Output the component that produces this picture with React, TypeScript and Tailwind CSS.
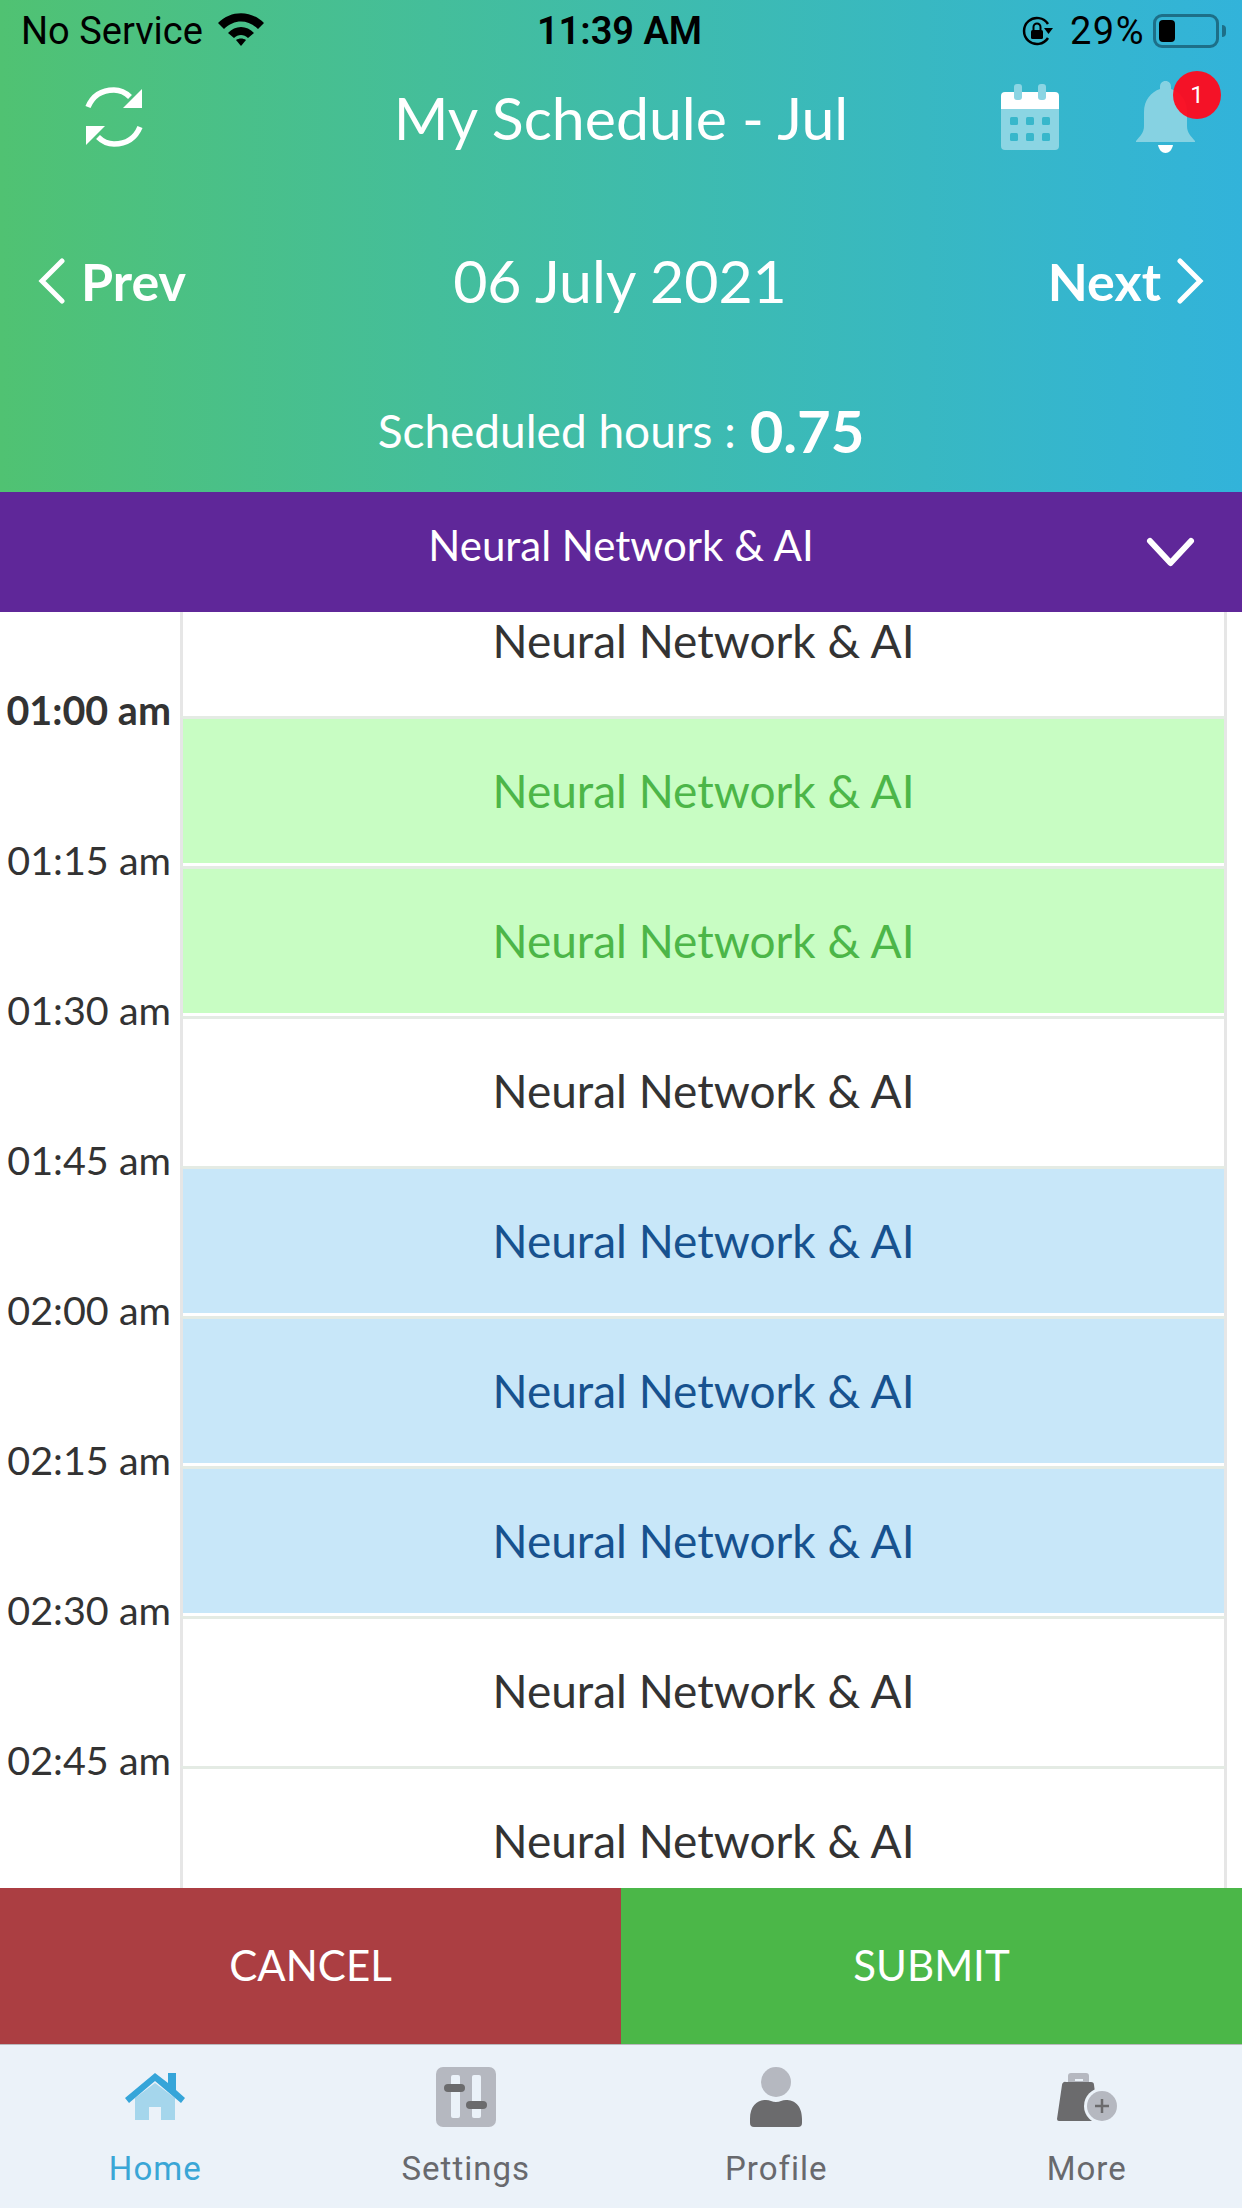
const rows = [
  { time: "01:00 am", kind: "white", bold: true },
  { time: "01:15 am", kind: "green" },
  { time: "01:30 am", kind: "green" },
  { time: "01:45 am", kind: "white" },
  { time: "02:00 am", kind: "blue" },
  { time: "02:15 am", kind: "blue" },
  { time: "02:30 am", kind: "blue" },
  { time: "02:45 am", kind: "white" },
  { time: "", kind: "white" },
];

const cellStyles: Record<string, string> = {
  white: "bg-white text-[#333333]",
  green: "bg-[#c8fdc3] text-[#4cb648]",
  blue: "bg-[#c8e7f9] text-[#17528f]",
};

function StatusBar() {
  return (
    <div className="flex h-[62px] items-center justify-between pl-[21px] pr-[16px] font-['Roboto',sans-serif] text-[38px] text-black">
      <div className="flex w-[400px] items-center gap-[15px]">
        <span>No Service</span>
        <svg width="46" height="33" viewBox="0 0 46 33" className="-mt-[3px]">
          <path d="M0 10C13 -3 33 -3 46 10L40 16C30 6 16 6 6 16Z" fill="black" />
          <path d="M10 20C17 12 29 12 36 20L30 25C26 21 20 21 16 25Z" fill="black" />
          <path d="M18 27C21 25 25 25 28 27L23 33Z" fill="black" />
        </svg>
      </div>
      <span className="pr-[8px] font-semibold">11:39 AM</span>
      <div className="flex w-[400px] items-center justify-end">
        <svg width="31" height="30" viewBox="0 0 31 30" className="mr-[17px]">
          <path d="M26 22A13 13 0 1 1 26 8" fill="none" stroke="black" strokeWidth="2.500" />
          <path d="M22 12H31L26.500 18Z" fill="black" />
          <rect x="9" y="14" width="12" height="9" rx="1.500" fill="black" />
          <path d="M11.500 14V11A3.500 3.500 0 0 1 18.500 11V14" fill="none" stroke="black" strokeWidth="2" />
        </svg>
        <span className="mr-[8px] tracking-[1.500px]">29%</span>
        <div className="-mt-[1px] flex h-[34px] w-[66px] items-center rounded-[9px] border-[3px] border-[#1d6f88] p-[3px]">
          <div className="h-full w-[16px] rounded-[4px] bg-black" />
        </div>
        <div className="ml-[3px] h-[12px] w-[4px] rounded-r-full bg-[#1d6f88]" />
      </div>
    </div>
  );
}

function SyncIcon() {
  return (
    <svg width="58" height="62" viewBox="0 0 58 62" fill="none">
      <path d="M3 21C8 9 18 4 29 4C35 4 40 6 45 11" stroke="white" strokeWidth="5.500" />
      <path d="M57 3V22H38Z" fill="white" />
      <path d="M55 41C50 53 40 58 29 58C23 58 18 56 13 51" stroke="white" strokeWidth="5.500" />
      <path d="M1 59V40H20Z" fill="white" />
    </svg>
  );
}

function CalendarIcon() {
  return (
    <svg width="58" height="66" viewBox="0 0 58 66">
      <path d="M4 8H54A4 4 0 0 1 58 12V25H0V12A4 4 0 0 1 4 8Z" fill="white" />
      <path d="M0 25H58V62A4 4 0 0 1 54 66H4A4 4 0 0 1 0 62Z" fill="#8bd5e3" />
      <rect x="13" y="0" width="8" height="16" rx="3" fill="#8bd5e3" />
      <rect x="37" y="0" width="8" height="16" rx="3" fill="#8bd5e3" />
      {[9, 25, 41].map((x) =>
        [33, 49].map((y) => <rect key={`${x}-${y}`} x={x} y={y} width="8" height="8" rx="1.500" fill="#38b7cb" />),
      )}
    </svg>
  );
}

function BellIcon() {
  return (
    <div className="relative h-[72px] w-[59px]">
      <svg width="59" height="72" viewBox="0 0 59 72">
        <path
          d="M29.500 0C33 0 35 2.500 35 6V8C44 11 51 19 51 31V45C51 52 55 55 59 60V61H0V60C4 55 8 52 8 45V31C8 19 15 11 24 8V6C24 2.500 26 0 29.500 0Z"
          fill="#86d2e2"
        />
        <path d="M22 64H37C36 69 33 72 29.500 72C26 72 23 69 22 64Z" fill="white" />
      </svg>
      <div className="absolute left-[37px] top-[-10px] flex h-[48px] w-[48px] items-center justify-center rounded-full bg-[#ff0a1e]/95 font-['Roboto',sans-serif] text-[24px] text-white">
        1
      </div>
    </div>
  );
}

function Header() {
  return (
    <header className="h-[492px] shrink-0 bg-linear-to-r from-[#50c272] to-[#32b3da] font-['Lato',sans-serif] text-white">
      <StatusBar />
      <div className="flex h-[110px] items-center">
        <div className="w-[330px] pl-[85px]">
          <SyncIcon />
        </div>
        <h1 className="flex-1 text-center text-[59px] leading-none">My Schedule - Jul</h1>
        <div className="flex w-[330px] items-center justify-end gap-[77px] pr-[47px]">
          <CalendarIcon />
          <BellIcon />
        </div>
      </div>
      <div className="flex h-[218px] items-center justify-between px-[37px]">
        <button type="button" className="flex w-[250px] items-center gap-[16px] text-[52px] font-bold">
          <svg width="28" height="46" viewBox="0 0 28 46" fill="none">
            <path d="M25 3L5 23L25 43" stroke="white" strokeWidth="5" strokeLinecap="round" />
          </svg>
          Prev
        </button>
        <div className="pr-[2px] text-[59px]">06 July 2021</div>
        <button type="button" className="flex w-[250px] items-center justify-end gap-[16px] text-[52px] font-bold">
          Next
          <svg width="28" height="46" viewBox="0 0 28 46" fill="none">
            <path d="M3 3L23 23L3 43" stroke="white" strokeWidth="5" strokeLinecap="round" />
          </svg>
        </button>
      </div>
      <div className="flex h-[102px] items-center justify-center gap-[14px] pb-[22px]">
        <span className="text-[46px]">Scheduled hours :</span>
        <span className="text-[58px] font-bold">0.75</span>
      </div>
    </header>
  );
}

function Schedule() {
  return (
    <div className="min-h-0 flex-1 overflow-hidden bg-white font-['Lato',sans-serif]">
      <div className="-mt-[46px]">
        {rows.map((row, i) => (
          <div key={i} className="flex h-[150px]">
            <div className="flex w-[180px] shrink-0 items-end justify-end pr-[9px]">
              <span className={`-mb-[16px] text-[39.5px] leading-[44px] text-[#333333] ${row.bold ? "font-bold" : ""}`}>
                {row.time}
              </span>
            </div>
            <div className="w-[1047px] border-x-[3px] border-t-[3px] border-x-[#e6e6e6] border-t-[#e4ebe4] bg-white pb-[3px]">
              <div className={`flex h-full items-center justify-center pb-[2px] text-[46px] ${cellStyles[row.kind]}`}>
                Neural Network & AI
              </div>
            </div>
          </div>
        ))}
      </div>
    </div>
  );
}

function TabBar() {
  return (
    <nav className="grid h-[164px] shrink-0 grid-cols-4 border-t border-[#b9b9bd] bg-[#ebf2f9] font-['Roboto',sans-serif] text-[33px] leading-[40px] tracking-[1px] text-[#68696d]">
      <div className="flex flex-col items-center">
        <div className="flex h-[83px] items-end pb-[8px]">
          <svg width="60" height="47" viewBox="0 0 60 47">
            <path d="M10 25L30 10L50 25V47H36V34H24V47H10Z" fill="#a5d6ec" />
            <path d="M0 25L30 0L43 10V0H51V17L60 25L56 30L30 8L4 30Z" fill="#35a5d9" />
          </svg>
        </div>
        <span className="mt-[21px] text-[#3aa6d6]">Home</span>
      </div>
      <div className="flex flex-col items-center">
        <div className="flex h-[83px] items-end pb-[1px]">
          <svg width="60" height="60" viewBox="0 0 60 60">
            <rect width="60" height="60" rx="7" fill="#b5b8c0" />
            <rect x="15" y="8" width="9" height="43" rx="2" fill="#ebf2f9" />
            <rect x="36" y="8" width="9" height="43" rx="2" fill="#ebf2f9" />
            <rect x="8" y="17" width="21" height="8" rx="4" fill="#6b6b6d" />
            <rect x="30" y="34" width="21" height="8" rx="4" fill="#6b6b6d" />
          </svg>
        </div>
        <span className="mt-[21px]">Settings</span>
      </div>
      <div className="flex flex-col items-center">
        <div className="flex h-[83px] items-end pb-[1px]">
          <svg width="52" height="60" viewBox="0 0 52 60">
            <circle cx="26" cy="15" r="15" fill="#b5b8c0" />
            <path d="M0 52C0 38 8 33 16 33C20 33 22 35 26 35C30 35 32 33 36 33C44 33 52 38 52 52V56A4 4 0 0 1 48 60H4A4 4 0 0 1 0 56Z" fill="#6b6b6d" />
          </svg>
        </div>
        <span className="mt-[21px]">Profile</span>
      </div>
      <div className="flex flex-col items-center">
        <div className="flex h-[83px] items-end pb-[7px]">
          <svg width="60" height="48" viewBox="0 0 60 48">
            <path d="M11 10V3A3 3 0 0 1 14 0H29A3 3 0 0 1 32 3V10Z" fill="#b5b8c0" />
            <rect x="18" y="6" width="8" height="2" fill="#ebf2f9" />
            <path d="M9 9H34A3 3 0 0 1 37 12L42 48H2A2 2 0 0 1 0 46L5 12A3 3 0 0 1 9 9Z" fill="#6b6b6d" />
            <circle cx="45" cy="33" r="18" fill="#ebf2f9" />
            <circle cx="45" cy="33" r="15" fill="#b5b8c0" />
            <path d="M45 26V40M38 33H52" stroke="#6b6b6d" strokeWidth="2.500" />
          </svg>
        </div>
        <span className="mt-[21px]">More</span>
      </div>
    </nav>
  );
}

export default function App() {
  return (
    <div className="flex h-[2208px] w-[1242px] flex-col overflow-hidden bg-white">
      <Header />
      <div className="relative flex h-[120px] shrink-0 items-center justify-center bg-[#5f2799] font-['Lato',sans-serif] text-[42px] text-white">
        <span className="pb-[14px]">Neural Network & AI</span>
        <svg width="49" height="30" viewBox="0 0 49 30" fill="none" className="absolute right-[47px]">
          <path d="M4 4L24.500 26L45 4" stroke="white" strokeWidth="6" strokeLinecap="round" strokeLinejoin="round" />
        </svg>
      </div>
      <Schedule />
      <div className="flex h-[156px] shrink-0 font-['Lato',sans-serif] text-[42px] text-white">
        <button type="button" className="flex-1 bg-[#ab3e42] pb-[2px]">
          CANCEL
        </button>
        <button type="button" className="flex-1 bg-[#4bb748] pb-[2px]">
          SUBMIT
        </button>
      </div>
      <TabBar />
    </div>
  );
}
